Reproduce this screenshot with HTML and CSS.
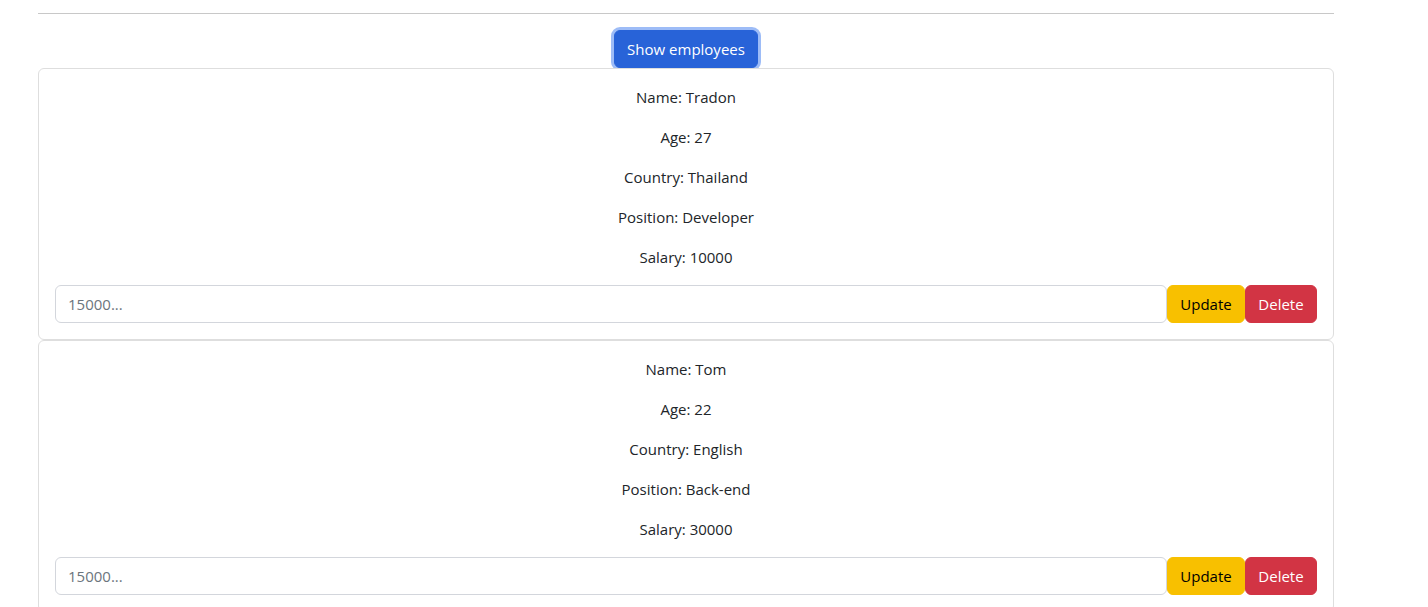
FILE: index.html
```html
<!DOCTYPE html>
<html>
<head>
<meta charset="utf-8">
<link rel="stylesheet" href="styles.css">
</head>
<body>
<div class="app">
  <hr class="rule">
  <div class="toolbar">
    <button class="btn btn-primary focused">Show employees</button>
  </div>
  <div class="card">
    <p>Name: Tradon</p>
    <p>Age: 27</p>
    <p>Country: Thailand</p>
    <p>Position: Developer</p>
    <p>Salary: 10000</p>
    <div class="edit-row">
      <input class="field" type="text" placeholder="15000...">
      <button class="btn btn-warning">Update</button>
      <button class="btn btn-danger">Delete</button>
    </div>
  </div>
  <div class="card">
    <p>Name: Tom</p>
    <p>Age: 22</p>
    <p>Country: English</p>
    <p>Position: Back-end</p>
    <p>Salary: 30000</p>
    <div class="edit-row">
      <input class="field" type="text" placeholder="15000...">
      <button class="btn btn-warning">Update</button>
      <button class="btn btn-danger">Delete</button>
    </div>
  </div>
</div>
</body>
</html>
```

FILE: styles.css
```css
* { box-sizing: border-box; }
body {
  margin: 0;
  background: #fff;
  color: #212529;
  font-family: "Open Sans", "Noto Sans", sans-serif;
  font-size: 15px;
  line-height: 24px;
}
.app {
  width: 1296px;
  margin-left: 38px;
}
.rule {
  margin: 13px 0 0;
  border: 0;
  border-top: 1px solid #c8c8c8;
  height: 0;
}
.toolbar {
  display: flex;
  justify-content: center;
  padding-top: 16px;
}
.btn {
  font-family: inherit;
  font-size: 15px;
  line-height: 24px;
  padding: 6px 12px 7px;
  border: 1px solid transparent;
  border-radius: 6px;
  cursor: pointer;
}
.btn-primary {
  background: #2863d8;
  border-color: #2863d8;
  color: #fff;
  width: 144px;
  height: 38px;
}
.focused {
  box-shadow: 0 0 0 3px #9dbcf7;
  position: relative;
  z-index: 0;
}
.card {
  position: relative;
  z-index: 1;
  background: #fff;
  border: 1px solid #dedede;
  border-radius: 6px;
  padding: 16px;
  text-align: center;
}
.card p {
  margin: 0 0 16px;
}
.edit-row {
  display: flex;
}
.field {
  flex: 1;
  height: 38px;
  padding: 6px 12px 7px;
  font-family: inherit;
  font-size: 15px;
  color: #212529;
  border: 1px solid #d3d6dc;
  border-radius: 6px;
  outline: none;
}
.field::placeholder { color: #6c757d; }
.btn-warning {
  background: #f8c000;
  border-color: #f8c000;
  color: #000;
  width: 78px;
  height: 38px;
}
.btn-danger {
  background: #d23444;
  border-color: #d23444;
  color: #fff;
  width: 72px;
  height: 38px;
}
```
